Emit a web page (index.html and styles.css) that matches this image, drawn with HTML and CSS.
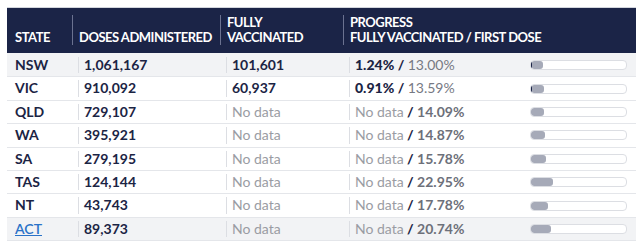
FILE: index.html
```html
<!DOCTYPE html>
<html>
<head>
<meta charset="utf-8">
<link rel="stylesheet" href="styles.css">
</head>
<body>
<table class="vax">
  <colgroup>
    <col class="c1"><col class="c2"><col class="c3"><col class="c4"><col class="c5">
  </colgroup>
  <thead>
    <tr>
      <th class="first"><div class="hd">STATE</div></th>
      <th><div class="hd sep">DOSES ADMINISTERED</div></th>
      <th><div class="hd sep"><span>FULLY</span><span>VACCINATED</span></div></th>
      <th colspan="2"><div class="hd sep"><span>PROGRESS</span><span>FULLY VACCINATED / FIRST DOSE</span></div></th>
    </tr>
  </thead>
  <tbody>
    <tr class="alt">
      <td class="first">NSW</td>
      <td><div class="cell">1,061,167</div></td>
      <td><div class="cell">101,601</div></td>
      <td><div class="cell"><b>1.24%</b> <b>/</b> <span class="lt">13.00%</span></div></td>
      <td><div class="bar"><div class="fill" style="width:13.00%"><div class="full" style="width:9.5%"></div></div></div></td>
    </tr>
    <tr>
      <td class="first">VIC</td>
      <td><div class="cell">910,092</div></td>
      <td><div class="cell">60,937</div></td>
      <td><div class="cell"><b>0.91%</b> <b>/</b> <span class="lt">13.59%</span></div></td>
      <td><div class="bar"><div class="fill" style="width:13.59%"><div class="full" style="width:6.7%"></div></div></div></td>
    </tr>
    <tr>
      <td class="first">QLD</td>
      <td><div class="cell">729,107</div></td>
      <td><div class="cell"><span class="nd">No data</span></div></td>
      <td><div class="cell"><span class="nd">No data</span> <b>/</b> <span class="dk">14.09%</span></div></td>
      <td><div class="bar"><div class="fill" style="width:14.09%"></div></div></td>
    </tr>
    <tr>
      <td class="first">WA</td>
      <td><div class="cell">395,921</div></td>
      <td><div class="cell"><span class="nd">No data</span></div></td>
      <td><div class="cell"><span class="nd">No data</span> <b>/</b> <span class="dk">14.87%</span></div></td>
      <td><div class="bar"><div class="fill" style="width:14.87%"></div></div></td>
    </tr>
    <tr>
      <td class="first">SA</td>
      <td><div class="cell">279,195</div></td>
      <td><div class="cell"><span class="nd">No data</span></div></td>
      <td><div class="cell"><span class="nd">No data</span> <b>/</b> <span class="dk">15.78%</span></div></td>
      <td><div class="bar"><div class="fill" style="width:15.78%"></div></div></td>
    </tr>
    <tr>
      <td class="first">TAS</td>
      <td><div class="cell">124,144</div></td>
      <td><div class="cell"><span class="nd">No data</span></div></td>
      <td><div class="cell"><span class="nd">No data</span> <b>/</b> <span class="dk">22.95%</span></div></td>
      <td><div class="bar"><div class="fill" style="width:22.95%"></div></div></td>
    </tr>
    <tr>
      <td class="first">NT</td>
      <td><div class="cell">43,743</div></td>
      <td><div class="cell"><span class="nd">No data</span></div></td>
      <td><div class="cell"><span class="nd">No data</span> <b>/</b> <span class="dk">17.78%</span></div></td>
      <td><div class="bar"><div class="fill" style="width:17.78%"></div></div></td>
    </tr>
    <tr class="alt">
      <td class="first"><a href="#">ACT</a></td>
      <td><div class="cell">89,373</div></td>
      <td><div class="cell"><span class="nd">No data</span></div></td>
      <td><div class="cell"><span class="nd">No data</span> <b>/</b> <span class="dk">20.74%</span></div></td>
      <td><div class="bar"><div class="fill" style="width:20.74%"></div></div></td>
    </tr>
  </tbody>
</table>
</body>
</html>
```

FILE: styles.css
```css
html, body {
  margin: 0;
  padding: 0;
  background: #ffffff;
}
body {
  padding: 7px 0 0 7px;
  font-family: Lato, "Liberation Sans", sans-serif;
  color: #1b2444;
}
.vax {
  border-collapse: collapse;
  table-layout: fixed;
  width: 629px;
  border-top: 1px solid #d3d6dd;
}
.c1 { width: 65px; }
.c2 { width: 148px; }
.c3 { width: 123px; }
.c4 { width: 181px; }
.c5 { width: 112px; }

thead th {
  background: #1b2447;
  color: #ffffff;
  font-weight: 700;
  font-size: 13px;
  letter-spacing: -0.5px;
  line-height: 15px;
  text-align: left;
  padding: 7px 0 8px 0;
  vertical-align: bottom;
  white-space: nowrap;
}
.hd {
  height: 30px;
  display: flex;
  flex-direction: column;
  justify-content: flex-end;
  padding-bottom: 0;
  box-sizing: border-box;
}
.hd span { display: block; height: 15px; }
th.first .hd { padding-left: 8px; }
.hd.sep {
  border-left: 1px solid #6b7290;
  padding-left: 6px;
}

tbody td {
  font-size: 14px;
  line-height: 16.4px;
  padding: 3px 0;
  border-bottom: 1px solid #e4e6ea;
  font-weight: 700;
  white-space: nowrap;
  vertical-align: middle;
}
tbody tr:first-child td { padding-top: 4px; }
tbody tr.alt td { background: #f2f3f5; }
td.first { padding-left: 8px; }
td.first a {
  color: #2a72c8;
  text-decoration: underline;
  font-weight: 600;
}
.cell {
  margin-left: 6px;
  border-left: 1px solid #dcdee3;
  padding-left: 5px;
}
.nd {
  font-weight: 400;
  color: #9a9ca3;
}
.lt {
  font-weight: 400;
  color: #767983;
}
.dk {
  color: #6d707a;
}
.bar {
  margin-left: 6px;
  width: 97px;
  height: 10px;
  box-sizing: border-box;
  border: 1px solid #dcdee3;
  border-radius: 4px;
  background: #ffffff;
  overflow: hidden;
}
.fill {
  height: 100%;
  background: #a6aab8;
  border-radius: 3px;
  overflow: hidden;
}
.full {
  height: 100%;
  background: #1b2447;
}
```
